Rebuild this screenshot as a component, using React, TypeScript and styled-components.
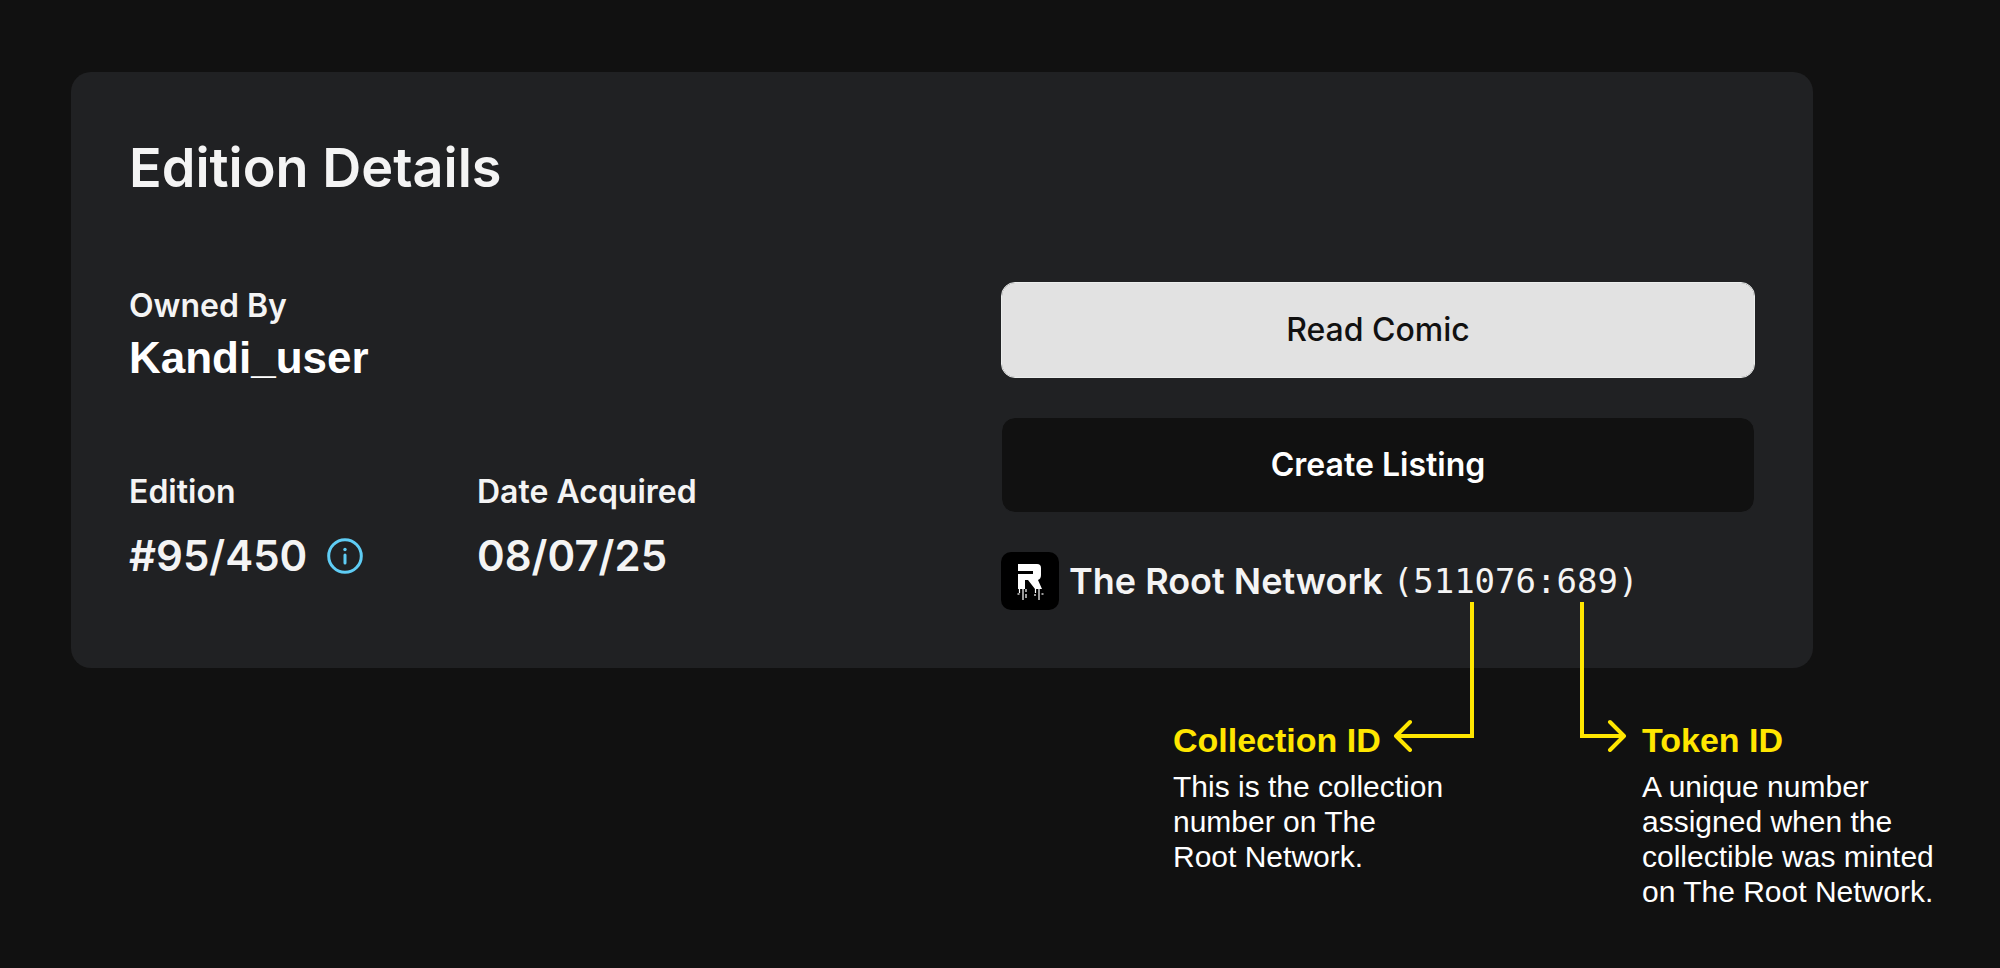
import React from "react";
import styled, { createGlobalStyle } from "styled-components";

const GlobalStyle = createGlobalStyle`
  *, *::before, *::after { box-sizing: border-box; }
  body {
    margin: 0;
    background: #111111;
    color: #f4f4f4;
    font-family: Inter, "Liberation Sans", sans-serif;
  }
`;

const Page = styled.main`
  min-height: 100vh;
  padding: 72px 56px 56px 71px;
`;

const Card = styled.section`
  margin-right: 131px;
  padding: 60px 58px 58px;
  border-radius: 20px;
  background: #202123;
`;

const Title = styled.h1`
  margin: 0;
  font-size: 54px;
  line-height: 72px;
  font-weight: 600;
`;

const Columns = styled.div`
  display: grid;
  grid-template-columns: minmax(0, 1fr) 754px;
  margin-top: 78px;
`;

const Details = styled.dl`
  display: grid;
  grid-template-columns: 348px auto;
  justify-content: start;
  align-content: start;
  row-gap: 82px;
  margin: 0;
  padding-top: 2px;
`;

const Detail = styled.div<{ $wide?: boolean }>`
  display: flex;
  flex-direction: column;
  gap: ${(p) => (p.$wide ? 0 : 12)}px;
  grid-column: ${(p) => (p.$wide ? "1 / -1" : "auto")};
`;

const Label = styled.dt`
  font-size: 32px;
  line-height: 44px;
  font-weight: 600;
`;

const Value = styled.dd<{ $user?: boolean }>`
  display: flex;
  align-items: center;
  gap: 20px;
  margin: 0;
  font-family: ${(p) => (p.$user ? '"Liberation Sans", Arial, sans-serif' : "inherit")};
  font-size: ${(p) => (p.$user ? 44 : 42)}px;
  line-height: 60px;
  font-weight: ${(p) => (p.$user ? 700 : 600)};
  color: ${(p) => (p.$user ? "#ffffff" : "inherit")};
`;

const InfoButton = styled.button`
  display: flex;
  padding: 0;
  border: 0;
  background: none;
  color: #5fcdf5;
  cursor: pointer;
`;

const Actions = styled.div`
  display: flex;
  flex-direction: column;
  gap: 39px;
`;

const Action = styled.button<{ $primary?: boolean }>`
  height: 96px;
  border: 1px solid ${(p) => (p.$primary ? "#eceeed" : "#202123")};
  border-radius: 14px;
  background: ${(p) => (p.$primary ? "#e2e2e2" : "#111111")};
  background-clip: padding-box;
  color: ${(p) => (p.$primary ? "#111111" : "#ffffff")};
  font-family: inherit;
  font-size: 32px;
  line-height: 44px;
  font-weight: ${(p) => (p.$primary ? 500 : 600)};
  cursor: pointer;
`;

const Network = styled.div`
  display: flex;
  align-items: center;
  gap: 10px;
  white-space: nowrap;
`;

const NetworkName = styled.span`
  font-size: 36px;
  line-height: 56px;
  font-weight: 600;
`;

const TokenPath = styled.code`
  font-family: "DejaVu Sans Mono", monospace;
  font-size: 34px;
  line-height: 56px;
`;

const Callouts = styled.div`
  display: grid;
  grid-template-columns: 469px 302px;
  justify-content: end;
  margin-top: 52px;
`;

const Callout = styled.section`
  position: relative;
  font-family: "Liberation Sans", Arial, sans-serif;
`;

const CalloutTitle = styled.h2`
  margin: 0;
  font-size: 34px;
  line-height: 40px;
  font-weight: 700;
  color: #ffe600;
`;

const CalloutText = styled.p`
  margin: 9px 0 0;
  font-size: 30px;
  line-height: 35px;
  color: #ffffff;
  white-space: nowrap;
`;

const Connector = styled.svg<{ $left: number }>`
  position: absolute;
  top: -118px;
  left: ${(p) => p.$left}px;
  fill: none;
  stroke: #ffe600;
  stroke-width: 4;
`;

function InfoIcon() {
  return (
    <svg width="36" height="36" viewBox="0 0 36 36" fill="none" stroke="currentColor" strokeWidth="3" aria-hidden="true">
      <circle cx="18" cy="18" r="16.3" />
      <path d="M18 17v8" strokeLinecap="round" />
      <circle cx="18" cy="11.5" r="1.7" fill="currentColor" stroke="none" />
    </svg>
  );
}

function RootLogo() {
  return (
    <svg width="58" height="58" viewBox="0 0 58 58" aria-hidden="true">
      <rect width="58" height="58" rx="10" fill="#000" />
      <path
        fill="#fff"
        d="M17 12h19q4 0 4 4v7q0 4-3 5l4 9h-7l-7-9h-3v9h-7V22h15v-3H17z"
      />
      <path d="M18.500 37v4M22 37v9M25 37v3M34.500 37v4M38 37v9" stroke="#fff" strokeWidth="1.200" fill="none" />
      <path d="M16.500 41h2v2h-2zM24 42h2v4h-2zM33 42h2v2h-2zM40.500 41h2v2h-2zM21 46h2v2h-2zM37 46h2v2h-2z" fill="#999" />
    </svg>
  );
}

export default function App() {
  return (
    <>
      <GlobalStyle />
      <Page>
        <Card>
          <Title>Edition Details</Title>
          <Columns>
            <Details>
              <Detail $wide>
                <Label>Owned By</Label>
                <Value $user>Kandi_user</Value>
              </Detail>
              <Detail>
                <Label>Edition</Label>
                <Value>
                  #95/450
                  <InfoButton type="button" aria-label="About this edition">
                    <InfoIcon />
                  </InfoButton>
                </Value>
              </Detail>
              <Detail>
                <Label>Date Acquired</Label>
                <Value>08/07/25</Value>
              </Detail>
            </Details>
            <Actions>
              <Action type="button" $primary>Read Comic</Action>
              <Action type="button">Create Listing</Action>
              <Network>
                <RootLogo />
                <NetworkName>The Root Network</NetworkName>
                <TokenPath>(511076:689)</TokenPath>
              </Network>
            </Actions>
          </Columns>
        </Card>
        <Callouts>
          <Callout>
            <CalloutTitle>Collection ID</CalloutTitle>
            <CalloutText>
              This is the collection<br />
              number on The<br />
              Root Network.
            </CalloutText>
            <Connector $left={219} width="84" height="150" viewBox="0 0 84 150" aria-hidden="true">
              <path d="M80 0v134H4" />
              <path d="M18 120L4 134l14 14" strokeLinecap="round" strokeLinejoin="round" />
            </Connector>
          </Callout>
          <Callout>
            <CalloutTitle>Token ID</CalloutTitle>
            <CalloutText>
              A unique number<br />
              assigned when the<br />
              collectible was minted<br />
              on The Root Network.
            </CalloutText>
            <Connector $left={-62} width="48" height="150" viewBox="0 0 48 150" aria-hidden="true">
              <path d="M2 0v134h41" />
              <path d="M30 120l14 14-14 14" strokeLinecap="round" strokeLinejoin="round" />
            </Connector>
          </Callout>
        </Callouts>
      </Page>
    </>
  );
}
